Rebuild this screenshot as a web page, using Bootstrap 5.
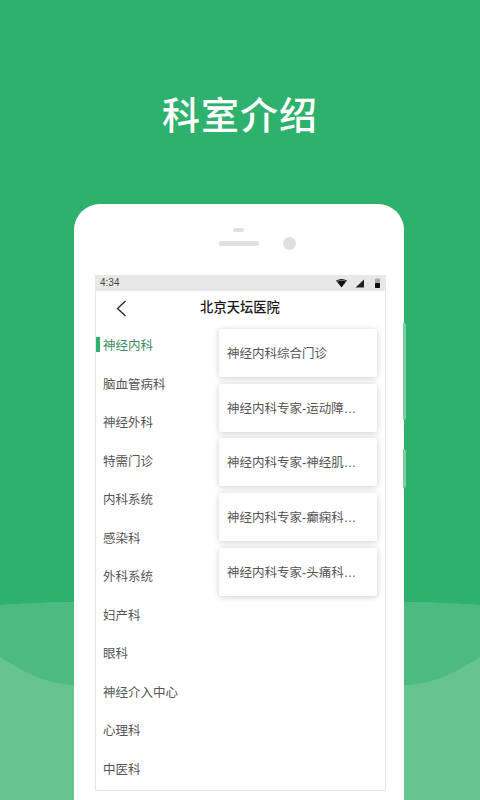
<!DOCTYPE html>
<html lang="zh-CN">
<head>
<meta charset="utf-8">
<title>科室介绍</title>
<link href="https://cdn.jsdelivr.net/npm/bootstrap@5.3.0/dist/css/bootstrap.min.css" rel="stylesheet">
<style>
html,body{margin:0;height:800px;overflow:hidden}
body{font-family:"Liberation Sans","Noto Sans CJK SC",sans-serif;background:#2eb16c;width:480px;position:relative}
.bg-waves{position:absolute;left:0;top:0;width:480px;height:800px}
.stage{position:relative;height:800px}
.hero-title{height:204px;padding-top:86px;margin:0;font-size:38px;line-height:54px;letter-spacing:1px;color:#fff;font-weight:500;text-align:center;font-family:"Noto Sans CJK SC",sans-serif}
.phone{position:relative;width:330px;height:596px;margin-left:74px;background:#fff;border-radius:26px 26px 0 0;padding:0 18px 0 21px}
.btn-side{position:absolute;left:329px;width:3px;background:#7fcda4;border-radius:0 2px 2px 0}
.btn-a{top:119px;height:97px}
.btn-b{top:245px;height:39px}
.sensor-row{height:71px;position:relative}
.ear-dot,.ear-bar,.cam{position:absolute;background:#e0e0e0}
.ear-dot{left:138px;top:24px;width:11px;height:4px;border-radius:2px}
.ear-bar{left:124px;top:37px;width:40px;height:5px;border-radius:3px}
.cam{left:188px;top:33px;width:13px;height:13px;border-radius:50%}
.screen{width:291px;height:516px;display:flex;flex-direction:column;background:#fff;border:solid #e4e4e4;border-width:0 1px 1px;border-radius:0 0 2px 2px}
.status{height:16px;background:#e8e8e8;margin:0 -1px;padding:0 5px;font-size:10px;color:#444;line-height:16px;flex:none}
.status svg{display:block}
.appbar{height:34px;flex:none;position:relative;font-size:13.3px;font-weight:500;color:#1a1a1a;line-height:34px;text-align:center;padding-right:1px}
.back{position:absolute;left:20px;top:9px}
.body-row{flex:1;min-height:0}
.dept-col{width:123px;flex:none;padding-top:2px}
.dept{height:38.5px;line-height:38.5px;padding-left:7px;font-size:12.5px;color:#555;position:relative;white-space:nowrap}
.dept.on{color:#3f8d63}
.dept.on::before{content:"";position:absolute;left:0;top:10px;width:4px;height:15px;background:#2eb16c}
.clinic-col{width:158px;padding-top:4px;gap:6.7px}
.clinic{height:48px;border:0;border-radius:2px;box-shadow:0 1px 6px rgba(0,0,0,.2);padding:0 8px;font-size:12.5px;line-height:50px;color:#555;flex:none;white-space:nowrap;display:block}
</style>
</head>
<body>
<svg class="bg-waves" viewBox="0 0 480 800" aria-hidden="true">
<path d="M0 605C30 603 60 602 90 602H390C420 602 450 603 480 605V800H0Z" fill="#66c491"/>
<path d="M0 605C30 603 60 602 90 602H390C420 602 450 603 480 605V657Q440 684 406 685H74Q40 684 0 657Z" fill="#4dba81"/>
</svg>
<div class="stage">
<h1 class="hero-title">科室介绍</h1>
<div class="phone">
<span class="btn-side btn-a"></span><span class="btn-side btn-b"></span>
<div class="sensor-row"><span class="ear-dot"></span><span class="ear-bar"></span><span class="cam"></span></div>
<div class="screen">
<div class="status d-flex align-items-center justify-content-between">
<span>4:34</span>
<span class="d-flex align-items-center" >
<svg width="46" height="11" viewBox="0 0 46 11"><path d="M1 2.5Q6.5-.5 12 2.5L6.500 9.500Z" fill="#111"/><path d="M1.500 3Q6.500.8 11.500 3L11 3.800Q6.500 1.800 2 3.800Z" fill="#888"/><path d="M29 1.500V9.500H20.500Z" fill="#222"/><rect x="40" y=".5" width="5" height="9.500" rx="1" fill="#aaa"/><rect x="40" y="5" width="5" height="5" rx=".8" fill="#111"/></svg>
</span>
</div>
<div class="appbar">
<svg class="back" width="11" height="17" viewBox="0 0 11 17"><path d="M9.500 1 1.500 8.500l8 7.500" fill="none" stroke="#222" stroke-width="1.300"/></svg>
北京天坛医院
</div>
<div class="body-row d-flex">
<div class="dept-col">
<div class="dept on">神经内科</div>
<div class="dept">脑血管病科</div>
<div class="dept">神经外科</div>
<div class="dept">特需门诊</div>
<div class="dept">内科系统</div>
<div class="dept">感染科</div>
<div class="dept">外科系统</div>
<div class="dept">妇产科</div>
<div class="dept">眼科</div>
<div class="dept">神经介入中心</div>
<div class="dept">心理科</div>
<div class="dept">中医科</div>
</div>
<div class="clinic-col d-flex flex-column">
<div class="card clinic">神经内科综合门诊</div>
<div class="card clinic">神经内科专家-运动障…</div>
<div class="card clinic">神经内科专家-神经肌…</div>
<div class="card clinic">神经内科专家-癫痫科…</div>
<div class="card clinic">神经内科专家-头痛科…</div>
</div>
</div>
</div>
</div>
</div>
</body>
</html>
